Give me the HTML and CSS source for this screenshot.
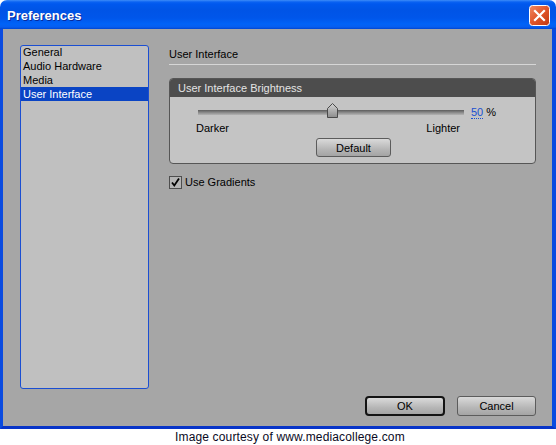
FILE: index.html
```html
<!DOCTYPE html>
<html>
<head>
<meta charset="utf-8">
<link rel="stylesheet" href="styles.css">
</head>
<body>
<div class="window">
  <div class="titlebar">
    <span class="title">Preferences</span>
    <svg class="close" width="21" height="21" viewBox="0 0 21 21">
      <defs>
        <linearGradient id="cg" x1="0" y1="0" x2="1" y2="1">
          <stop offset="0" stop-color="#f08a64"/>
          <stop offset="0.5" stop-color="#e0552a"/>
          <stop offset="1" stop-color="#c1380f"/>
        </linearGradient>
      </defs>
      <rect x="0.5" y="0.5" width="20" height="20" rx="3" fill="url(#cg)" stroke="#ffffff"/>
      <path d="M6 6 L15 15 M15 6 L6 15" stroke="#ffffff" stroke-width="2.2" stroke-linecap="square"/>
    </svg>
  </div>
  <div class="client">
    <div class="main">
      <ul class="list">
        <li class="item first">General</li>
        <li class="item">Audio Hardware</li>
        <li class="item">Media</li>
        <li class="item selected">User Interface</li>
      </ul>
      <div class="panel">
        <div class="panel-title">User Interface</div>
        <div class="group">
          <div class="group-head">User Interface Brightness</div>
          <div class="group-body">
            <div class="slider-row">
              <div class="track">
                <svg class="thumb" width="11" height="15" viewBox="0 0 11 15">
                  <defs>
                    <linearGradient id="tg" x1="0" y1="0" x2="0" y2="1">
                      <stop offset="0" stop-color="#d4d4d4"/>
                      <stop offset="1" stop-color="#8c8c8c"/>
                    </linearGradient>
                  </defs>
                  <polygon points="5.5,0.5 10.5,5.5 10.5,14.5 0.5,14.5 0.5,5.5" fill="url(#tg)" stroke="#4a4a4a"/>
                </svg>
              </div>
              <span class="value">50</span><span class="pct">%</span>
            </div>
            <div class="labels"><span>Darker</span><span>Lighter</span></div>
            <div class="default-row"><button class="btn default">Default</button></div>
          </div>
        </div>
        <div class="check-row">
          <svg class="check" width="13" height="13" viewBox="0 0 13 13">
            <rect x="0.5" y="0.5" width="12" height="12" fill="#b4b4b4" stroke="#4e4e4e"/>
            <path d="M3 6.5 L5.3 9.5 L10 2.5" fill="none" stroke="#000" stroke-width="1.8"/>
          </svg>
          <span>Use Gradients</span>
        </div>
      </div>
    </div>
    <div class="buttons">
      <button class="btn ok">OK</button>
      <button class="btn cancel">Cancel</button>
    </div>
  </div>
</div>
<div class="caption">Image courtesy of www.mediacollege.com</div>
</body>
</html>
```
FILE: styles.css
```css
html, body {
  margin: 0;
  padding: 0;
  background: #ffffff;
}
body {
  font-family: "Liberation Sans", Arial, sans-serif;
  font-size: 11px;
  color: #000;
}
.window {
  width: 556px;
}
.titlebar {
  height: 29px;
  box-sizing: border-box;
  border-radius: 7px 7px 0 0;
  background: linear-gradient(to bottom, #3d8cf8 0px, #0a62f2 2px, #0058ee 4px, #0054e6 10px, #0056ea 18px, #0063f8 24px, #065ef0 27px, #0046d2 29px);
  display: flex;
  justify-content: space-between;
  align-items: flex-start;
  padding: 0 6px 0 7px;
}
.title {
  color: #ffffff;
  font-weight: bold;
  font-size: 13px;
  line-height: 16px;
  margin-top: 8px;
  text-shadow: 1px 1px 0 #0a2a9a;
}
.close {
  margin-top: 5px;
  display: block;
}
.client {
  background: #a6a6a6;
  border-left: 3px solid #0a4be0;
  border-right: 4px solid #0a4be0;
  border-bottom: 3px solid #0834c8;
  height: 400px;
  width: 556px;
  padding: 16px 16px 10px 17px;
  box-sizing: border-box;
  display: flex;
  flex-direction: column;
}
.main {
  display: flex;
  align-items: flex-start;
  gap: 20px;
  height: 344px;
  flex: none;
}
.list {
  list-style: none;
  margin: 0;
  padding: 0;
  width: 127px;
  height: 342px;
  background: #c0c0c0;
  border: 1px solid #1b4ed2;
  border-radius: 3px;
  flex: none;
}
.item {
  line-height: 14px;
  height: 14px;
  padding-left: 2px;
  white-space: nowrap;
}
.item.first {
  margin-top: -1px;
}
.item.selected {
  background: #0a44c4;
  color: #ffffff;
}
.panel {
  width: 367px;
  display: flex;
  flex-direction: column;
}
.panel-title {
  line-height: 14px;
  padding: 2px 0 3px 0;
  border-bottom: 1px solid #d6d6d6;
}
.group {
  margin-top: 13px;
  border: 1px solid #565656;
  border-radius: 4px;
  background: #c4c4c4;
  overflow: hidden;
}
.group-head {
  background: #4d4d4d;
  color: #e4e4e4;
  height: 18px;
  line-height: 18px;
  padding-left: 8px;
}
.group-body {
  padding: 7px 0 6px 0;
}
.slider-row {
  display: flex;
  align-items: center;
  height: 16px;
  margin-left: 28px;
}
.track {
  position: relative;
  width: 266px;
  height: 5px;
  background: linear-gradient(to bottom, #5c5c5c, #8a8a8a 50%, #b4b4b4);
  margin-right: 7px;
}
.thumb {
  position: absolute;
  left: 129px;
  top: -7px;
  display: block;
}
.value {
  color: #1a4fd0;
  border-bottom: 1px dotted #1a4fd0;
  line-height: 12px;
}
.pct {
  margin-left: 3px;
}
.labels {
  display: flex;
  justify-content: space-between;
  width: 264px;
  margin-left: 26px;
  margin-top: 1px;
  line-height: 14px;
}
.default-row {
  display: flex;
  justify-content: center;
  margin-top: 3px;
}
.btn {
  font-family: "Liberation Sans", Arial, sans-serif;
  font-size: 11px;
  color: #000;
  height: 19px;
  padding: 0;
  border: 1px solid #5c5c5c;
  border-radius: 3px;
  background: linear-gradient(to bottom, #dadada, #b6b6b6 60%, #a4a4a4);
  box-sizing: border-box;
}
.default {
  width: 75px;
  margin-left: 2px;
}
.check-row {
  margin-top: 12px;
  display: flex;
  align-items: center;
  gap: 3px;
  line-height: 13px;
}
.check {
  display: block;
}
.buttons {
  margin-top: 7px;
  display: flex;
  justify-content: flex-end;
  gap: 12px;
}
.ok {
  width: 80px;
  height: 20px;
  border: 2px solid #141414;
  border-radius: 4px;
}
.cancel {
  width: 79px;
  height: 20px;
}
.caption {
  margin-left: 175px;
  font-size: 12px;
  line-height: 16px;
  letter-spacing: 0.15px;
  color: #0a0a24;
}
```
